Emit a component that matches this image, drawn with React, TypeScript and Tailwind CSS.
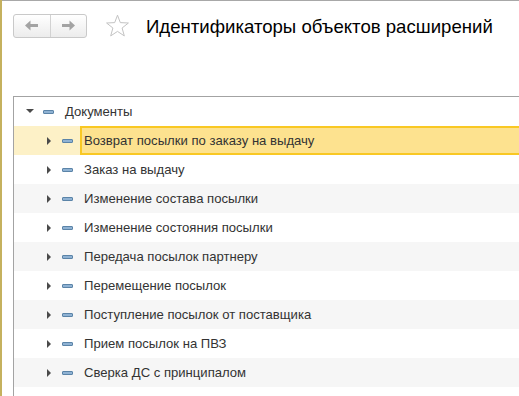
import React from "react";

const items = [
  "Возврат посылки по заказу на выдачу",
  "Заказ на выдачу",
  "Изменение состава посылки",
  "Изменение состояния посылки",
  "Передача посылок партнеру",
  "Перемещение посылок",
  "Поступление посылок от поставщика",
  "Прием посылок на ПВЗ",
  "Сверка ДС с принципалом",
];

function Dash() {
  return <div className="w-[11px] h-[4px] bg-[#8fb2d3] border border-[#5b84a8] rounded-[1px]" />;
}

function TriRight() {
  return (
    <svg width="5" height="8" viewBox="0 0 5 8">
      <path d="M0 0 L4 4 L0 8 Z" fill="#4a4a4a" />
    </svg>
  );
}

function TriDown() {
  return (
    <svg width="8" height="5" viewBox="0 0 8 5">
      <path d="M0 0 L8 0 L4 4 Z" fill="#4a4a4a" />
    </svg>
  );
}

export default function App() {
  return (
    <div className="flex w-[519px] h-[396px] overflow-hidden bg-white font-['Liberation_Sans',Arial,sans-serif]">
      <div className="w-[2px] shrink-0 bg-[#c5b15e]" />
      <div className="flex-1 flex flex-col border-t border-[#a8a8a8] min-w-0">
        <div className="flex items-center h-[48px] pl-[11px] pt-[1px]">
          <div className="flex h-[24px] w-[74px] rounded-[3px] border border-[#c9c9c9] bg-gradient-to-b from-white to-[#ececec]">
            <div className="flex-1 flex items-center justify-center border-r border-[#d2d2d2]">
              <svg width="15" height="11" viewBox="0 0 15 11">
                <path d="M1 5.5 L6.5 0.5 L6.5 4 L14 4 L14 7 L6.5 7 L6.5 10.5 Z" fill="#a3a3a3" />
              </svg>
            </div>
            <div className="flex-1 flex items-center justify-center">
              <svg width="15" height="11" viewBox="0 0 15 11">
                <path d="M14 5.5 L8.5 0.5 L8.5 4 L1 4 L1 7 L8.5 7 L8.5 10.5 Z" fill="#a3a3a3" />
              </svg>
            </div>
          </div>
          <svg className="ml-[18px]" width="25" height="24" viewBox="0 0 25 24">
            <path
              d="M12.5 1.2 L15.3 8.6 L23.4 9 L17.1 14 L19.3 21.9 L12.5 17.4 L5.7 21.9 L7.9 14 L1.6 9 L9.7 8.6 Z"
              fill="none"
              stroke="#c3c3c3"
              strokeWidth="1"
              strokeLinejoin="miter"
            />
          </svg>
          <div className="ml-[16px] mt-[4px] text-[18.6px] text-black leading-none whitespace-nowrap">
            Идентификаторы объектов расширений
          </div>
        </div>
        <div className="h-[47px]" />
        <div className="ml-[11px] mr-[-10px] border-l border-t border-[#a3a3a3] flex-1 flex flex-col text-[13.1px] text-[#333]">
          <div className="flex items-center h-[29px] shrink-0">
            <div className="ml-[12px]"><TriDown /></div>
            <div className="ml-[9px]"><Dash /></div>
            <div className="ml-[11px] whitespace-nowrap">Документы</div>
          </div>
          {items.map((t, i) => {
            const sel = i === 0;
            const bg = sel ? "bg-[#fdf1c7]" : i % 2 === 0 ? "bg-[#f6f6f6]" : "bg-white";
            return (
              <div key={t} className={`flex items-center h-[29px] shrink-0 ${bg}`}>
                <div className="ml-[33px]"><TriRight /></div>
                <div className="ml-[10px]"><Dash /></div>
                {sel ? (
                  <div className="ml-[7px] flex-1 h-[29px] flex items-center border-2 border-[#f9c823] bg-[#fde28f] pl-[2px] whitespace-nowrap">
                    {t}
                  </div>
                ) : (
                  <div className="ml-[11px] whitespace-nowrap">{t}</div>
                )}
              </div>
            );
          })}
        </div>
      </div>
    </div>
  );
}
